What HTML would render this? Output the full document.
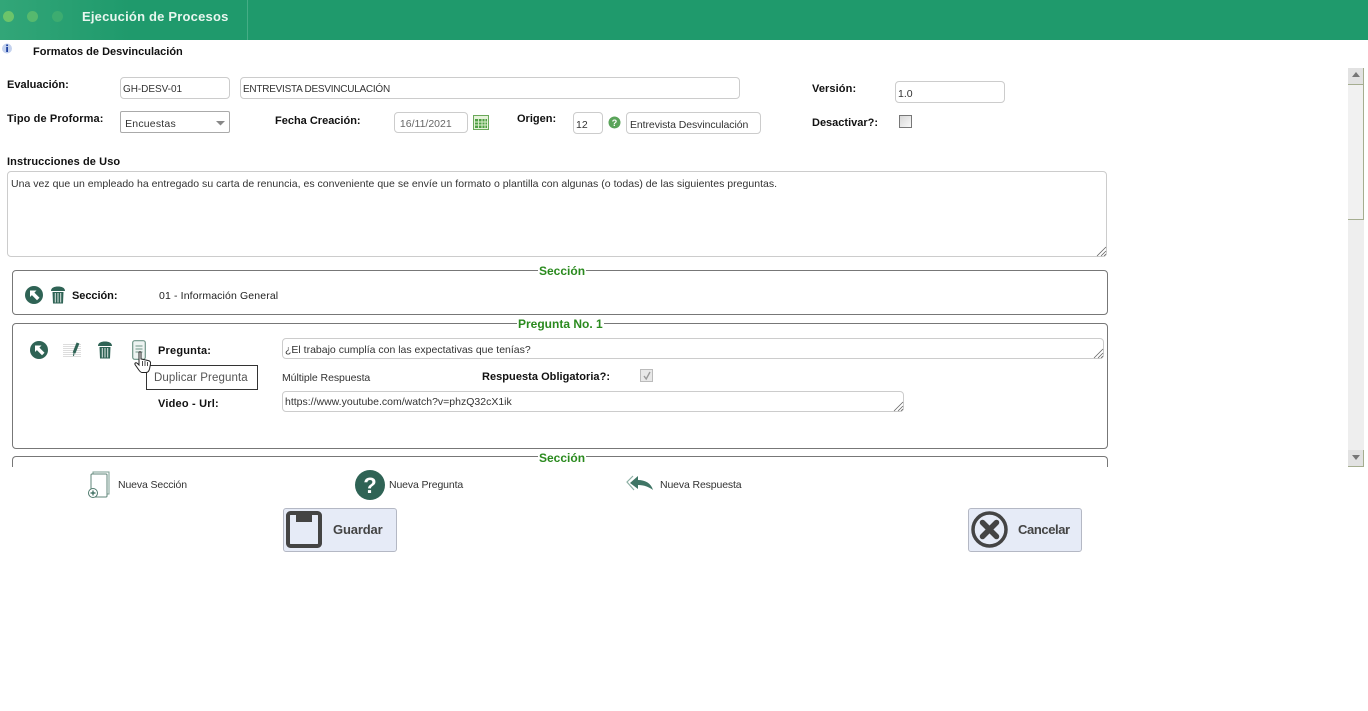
<!DOCTYPE html>
<html lang="es"><head><meta charset="utf-8"><title>Ejecución de Procesos</title>
<style>
html,body{margin:0;padding:0;background:#fff;width:1368px;height:711px;overflow:hidden}
body{position:relative;font-family:"Liberation Sans",sans-serif;font-size:10.5px;color:#222}
.a{position:absolute;white-space:nowrap}
.b{font-weight:bold;font-size:11px;color:#111}
.i{position:absolute;box-sizing:border-box;border:1px solid #ccc;border-radius:4px;background:#fff;padding:0 3px;white-space:nowrap;overflow:hidden;color:#333;font-size:10.5px}
.box{position:absolute;box-sizing:border-box;border:1px solid #777;border-radius:4px;left:12px;width:1096px}
.leg{position:absolute;background:#fff;color:#2a8a1e;font-weight:bold;font-size:12px;padding:0 1px;white-space:nowrap}
.btn{position:absolute;box-sizing:border-box;top:508px;width:114px;height:44px;background:#e6ebf7;border:1px solid #b4b8c4;border-radius:3px}
svg{position:absolute;overflow:visible}
</style></head><body>
<div class="a" style="left:0;top:0;width:1368px;height:40px;background:linear-gradient(90deg,#32a678 0,#1f9a6c 130px,#1f9a6c 100%)"></div>
<div class="a" style="left:247px;top:0;width:1px;height:40px;background:#45ad86"></div>
<div class="a" style="left:3px;top:11px;width:11px;height:11px;border-radius:50%;background:#6cc46a"></div>
<div class="a" style="left:27px;top:11px;width:11px;height:11px;border-radius:50%;background:#56b96e"></div>
<div class="a" style="left:52px;top:11px;width:11px;height:11px;border-radius:50%;background:#3dac70"></div>
<div class="a" style="left:82px;top:9px;color:#e8f6ef;font-weight:bold;font-size:13px;letter-spacing:.2px">Ejecución de Procesos</div>
<svg style="left:1px;top:43px" width="12" height="12"><circle cx="6" cy="5.5" r="5" fill="#c4d2ee"/><rect x="5.2" y="1.5" width="1.8" height="1.6" fill="#1c3f9e"/><rect x="5.2" y="4" width="1.8" height="5" fill="#1c3f9e"/></svg>
<div class="a b" style="left:33px;top:46px">Formatos de Desvinculación</div>

<div class="a b" style="left:7px;top:79px">Evaluación:</div>
<div class="i" style="left:120px;top:77px;width:110px;height:22px;line-height:23px;font-size:10px;letter-spacing:-.05px;padding-left:2px">GH-DESV-01</div>
<div class="i" style="left:240px;top:77px;width:500px;height:22px;line-height:23px;font-size:10px;letter-spacing:-.25px;padding-left:2px">ENTREVISTA DESVINCULACIÓN</div>
<div class="a b" style="left:812px;top:83px;letter-spacing:.1px">Versión:</div>
<div class="i" style="left:895px;top:81px;width:110px;height:22px;line-height:24px;padding-left:2px">1.0</div>

<div class="a b" style="left:7px;top:113px;letter-spacing:.12px">Tipo de Proforma:</div>
<div class="i" style="left:120px;top:111px;width:110px;height:22px;line-height:25px;border-color:#aaa;border-radius:2px;letter-spacing:.2px">&#8202;Encuestas</div>
<svg style="left:216px;top:121px" width="10" height="6"><path d="M0 0H9L4.5 4.5Z" fill="#888"/></svg>
<div class="a b" style="left:275px;top:115px">Fecha Creación:</div>
<div class="i" style="left:394px;top:112px;width:74px;height:21px;line-height:23px;color:#666;padding-left:2px">&nbsp;16/11/2021</div>
<svg style="left:473px;top:115px" width="16" height="15"><rect x=".5" y=".5" width="15" height="14" fill="#e6f3da" stroke="#6aa85a"/><path d="M2 4H14V13H2Z" fill="#4f9f45"/><path d="M5.5 4V13M9 4V13M12 4V13M2 7H14M2 10H14" stroke="#dff0d0" stroke-width=".9"/></svg>
<div class="a b" style="left:517px;top:113px">Origen:</div>
<div class="i" style="left:573px;top:112px;width:30px;height:22px;line-height:24px;padding-left:2px">12</div>
<svg style="left:608px;top:116px" width="13" height="13"><circle cx="6.5" cy="6.5" r="6" fill="#5aa45a"/><text x="6.5" y="10" font-size="9" font-weight="bold" text-anchor="middle" fill="#fff" font-family="Liberation Sans">?</text></svg>
<div class="i" style="left:626px;top:112px;width:135px;height:22px;line-height:24px;letter-spacing:-.08px">Entrevista Desvinculación</div>
<div class="a b" style="left:812px;top:117px">Desactivar?:</div>
<div class="a" style="left:899px;top:115px;width:13px;height:13px;box-sizing:border-box;border:1px solid #777;background:linear-gradient(135deg,#d8d8d8,#f8f8f8)"></div>

<div class="a b" style="left:7px;top:156px;letter-spacing:.1px">Instrucciones de Uso</div>
<div class="i" style="left:7px;top:171px;width:1100px;height:86px;line-height:13px;padding:6px 3px;letter-spacing:.02px">Una vez que un empleado ha entregado su carta de renuncia, es conveniente que se envíe un formato o plantilla con algunas (o todas) de las siguientes preguntas.</div>
<svg style="left:1097px;top:247px" width="9" height="9"><path d="M0 9L9 0M4 9L9 4M7 9L9 7" stroke="#666" stroke-width=".8"/></svg>

<div class="box" style="top:270px;height:45px"></div>
<div class="leg" style="left:538px;top:264px">Sección</div>
<svg style="left:25px;top:286px" width="18" height="18"><circle cx="9" cy="9" r="9" fill="#2f6355"/><path d="M5 4.5H11.5L9.4 6.6 14.5 11.7 12 14.2 6.9 9.1 5 11Z" fill="#fff"/></svg>
<svg style="left:51px;top:286px" width="14" height="18"><path d="M0 5C0 1.5 3.5 .5 7 .5S14 1.5 14 5ZM1.5 6H12.5L12 17.5H2Z" fill="#2f6355"/><path d="M4.3 7V16.5M7 7V16.5M9.7 7V16.5" stroke="#fff" stroke-opacity=".85"/></svg>
<div class="a b" style="left:72px;top:290px;letter-spacing:-.05px">Sección:</div>
<div class="a" style="left:159px;top:290px;color:#222;font-size:10.5px;letter-spacing:.13px">01 - Información General</div>

<div class="box" style="top:323px;height:126px"></div>
<div class="leg" style="left:517px;top:317px">Pregunta No. 1</div>
<svg style="left:30px;top:341px" width="18" height="18"><circle cx="9" cy="9" r="9" fill="#2f6355"/><path d="M5 4.5H11.5L9.4 6.6 14.5 11.7 12 14.2 6.9 9.1 5 11Z" fill="#fff"/></svg>
<svg style="left:63px;top:341px" width="18" height="18"><path d="M0 3.5H18M0 5.5H18M0 7.5H18M0 9.5H18M0 11.5H18M0 13.5H18M0 15.5H18" stroke="#ddd"/><path d="M15 2L11 12" stroke="#2f6355" stroke-width="3"/><path d="M11 12L10.5 15" stroke="#2f6355"/></svg>
<svg style="left:98px;top:341px" width="14" height="18"><path d="M0 5C0 1.5 3.5 .5 7 .5S14 1.5 14 5ZM1.5 6H12.5L12 17.5H2Z" fill="#2f6355"/><path d="M4.3 7V16.5M7 7V16.5M9.7 7V16.5" stroke="#fff" stroke-opacity=".85"/></svg>
<svg style="left:132px;top:340px" width="14" height="20"><rect x=".7" y=".7" width="12.6" height="18.6" rx="2" fill="#eef4f2" stroke="#6f9487" stroke-width="1.2"/><path d="M3.5 6H10.5M3.5 9H10.5M3.5 12H10.5" stroke="#6f9487"/></svg>
<div class="a b" style="left:158px;top:345px;letter-spacing:.2px">Pregunta:</div>
<div class="i" style="left:282px;top:338px;width:822px;height:21px;line-height:22px;padding-left:2px">¿El trabajo cumplía con las expectativas que tenías?</div>
<svg style="left:1094px;top:349px" width="9" height="9"><path d="M0 9L9 0M4 9L9 4M7 9L9 7" stroke="#666" stroke-width=".8"/></svg>
<div class="a" style="left:282px;top:372px;color:#333;letter-spacing:-.06px">Múltiple Respuesta</div>
<div class="a b" style="left:482px;top:371px;letter-spacing:.04px">Respuesta Obligatoria?:</div>
<div class="a" style="left:640px;top:369px;width:13px;height:13px;box-sizing:border-box;border:1px solid #bbb;background:#e8e8e8"><svg style="left:2px;top:2px" width="8" height="8"><path d="M1 4L3.2 7L7 0" stroke="#999" stroke-width="1.4" fill="none"/></svg></div>
<div class="a b" style="left:158px;top:398px;letter-spacing:.2px">Video - Url:</div>
<div class="i" style="left:282px;top:391px;width:622px;height:21px;line-height:21px;padding-left:2px">https://www.youtube.com/watch?v=phzQ32cX1ik</div>
<svg style="left:894px;top:402px" width="9" height="9"><path d="M0 9L9 0M4 9L9 4M7 9L9 7" stroke="#666" stroke-width=".8"/></svg>
<div class="a" style="left:146px;top:365px;width:112px;height:25px;box-sizing:border-box;border:1px solid #333;background:#fff;color:#555;font-size:11.5px;line-height:25px;padding-left:7px;letter-spacing:.1px">Duplicar Pregunta</div>
<svg style="left:134px;top:351px" width="19" height="23"><path d="M5 1.5C5 .5 7 .5 7 1.5V8L14 9.5C16 10 17 11 16.5 13L15.5 18C15 20 14 21.5 12 21.5H8C6.5 21.5 5.5 20 4.5 18.5L1 13.5C.5 12 2 11 3.5 12.5L5 14Z" fill="#fff" stroke="#222"/><path d="M8.5 10V15M11 10V15M13.5 11V15" stroke="#222" stroke-width=".8"/></svg>

<div class="a" style="left:12px;top:456px;width:1096px;height:11px;box-sizing:border-box;border:1px solid #777;border-bottom:0;border-radius:4px 4px 0 0"></div>
<div class="leg" style="left:538px;top:451px">Sección</div>
<div class="a" style="left:0;top:467px;width:1348px;height:60px;background:#fff"></div>

<div class="a" style="left:1348px;top:68px;width:16px;height:399px;background:#eee"></div>
<div class="a" style="left:1348px;top:68px;width:15px;height:16px;background:#e2e2e2;border-bottom:1px solid #a5ad90;border-right:1px solid #a5ad90"></div>
<svg style="left:1352px;top:72px" width="8" height="5"><path d="M0 5H8L4 0Z" fill="#777"/></svg>
<div class="a" style="left:1348px;top:85px;width:15px;height:134px;background:#f1f1f1;border-bottom:1px solid #a5ad90;border-right:1px solid #a5ad90"></div>
<div class="a" style="left:1348px;top:450px;width:15px;height:16px;background:#e2e2e2;border-bottom:1px solid #a5ad90;border-right:1px solid #a5ad90"></div>
<svg style="left:1352px;top:455px" width="8" height="5"><path d="M0 0H8L4 5Z" fill="#777"/></svg>

<svg style="left:87px;top:471px" width="25" height="28"><rect x="6" y="1" width="16" height="22" fill="#fff" stroke="#7a9c90"/><rect x="4" y="3" width="16" height="23" rx="1" fill="#fff" stroke="#5f8578"/><circle cx="6" cy="22" r="4.5" fill="#fff" stroke="#4f7a6d"/><path d="M3.5 22H8.5M6 19.5V24.5" stroke="#2f6355" stroke-width="1.2"/></svg>
<div class="a" style="left:118px;top:479px;color:#333;letter-spacing:-.13px">Nueva Sección</div>
<svg style="left:355px;top:470px" width="30" height="30"><circle cx="15" cy="15" r="15" fill="#2f6355"/><text x="15" y="23" font-size="22" font-weight="bold" text-anchor="middle" fill="#fff" font-family="Liberation Sans">?</text></svg>
<div class="a" style="left:389px;top:479px;color:#333;letter-spacing:-.13px">Nueva Pregunta</div>
<svg style="left:626px;top:476px" width="28" height="16"><path d="M7 0L1 6L8 14" fill="none" stroke="#8db0a4" stroke-width="1.2"/><path d="M12 0L4 7L12 13V9C18 9 23 11 27 14C25 7 19 4 12 4Z" fill="#3f7565"/></svg>
<div class="a" style="left:660px;top:479px;color:#333;letter-spacing:-.13px">Nueva Respuesta</div>

<div class="btn" style="left:283px"></div>
<svg style="left:286px;top:511px" width="36" height="37"><rect x="2" y="2" width="32" height="33" rx="2.5" fill="#e6ebf7" stroke="#444" stroke-width="4"/><rect x="10" y="2" width="16" height="9" fill="#444"/></svg>
<div class="a" style="left:333px;top:522px;color:#444;font-weight:bold;font-size:13px;line-height:16px;letter-spacing:-.15px">Guardar</div>
<div class="btn" style="left:968px"></div>
<svg style="left:971px;top:511px" width="37" height="37"><circle cx="18.5" cy="18.5" r="16.5" fill="#e6ebf7" stroke="#444" stroke-width="3.5"/><path d="M11.5 11.5L25.5 25.5M25.5 11.5L11.5 25.5" stroke="#444" stroke-width="5.5" stroke-linecap="round"/></svg>
<div class="a" style="left:1018px;top:522px;color:#444;font-weight:bold;font-size:13px;line-height:16px;letter-spacing:-.4px">Cancelar</div>
</body></html>
